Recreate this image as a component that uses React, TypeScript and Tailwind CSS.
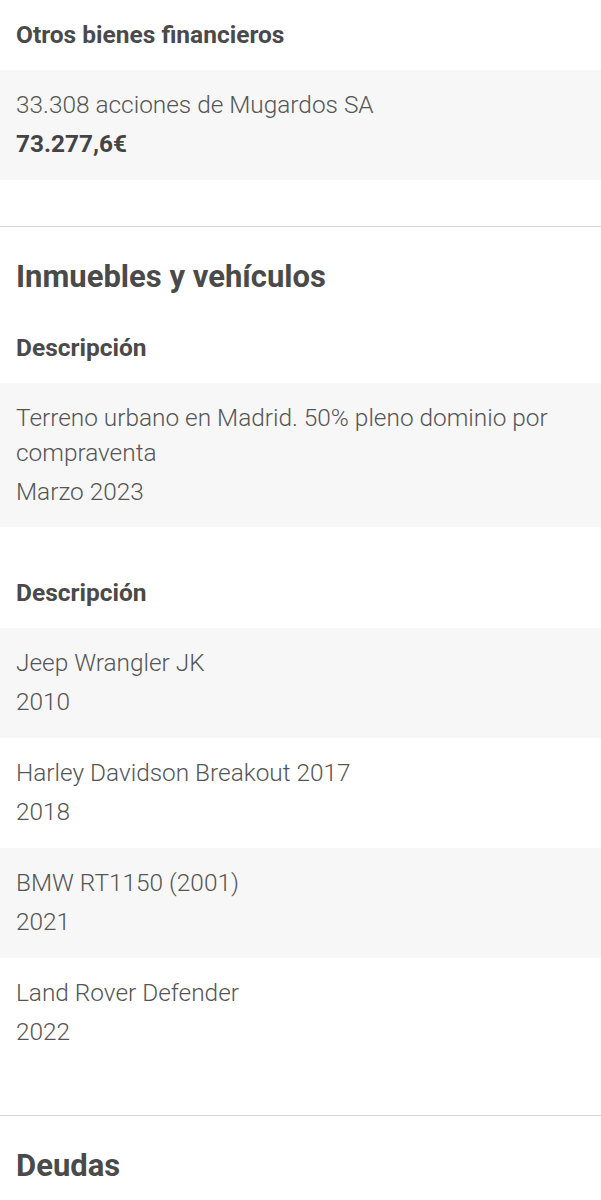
import React from "react";

type Item = { lines: string; sub: string; bold?: boolean };

function Label({ children }: { children: React.ReactNode }) {
  return (
    <div className="h-[70px] flex items-center px-4">
      <span className="text-[24.5px] font-bold text-[#4a4a4a] leading-none">{children}</span>
    </div>
  );
}

function Row({ item, gray, tight }: { item: Item; gray: boolean; tight?: boolean }) {
  return (
    <div
      className={
        (gray ? "bg-[#f7f7f7] " : "bg-white ") + (tight ? "px-4 pt-[17px] pb-[18px]" : "px-4 pt-[17px] pb-[19px]")
      }
    >
      <p className="text-[24.4px] font-light leading-[35px] text-[#555555]">{item.lines}</p>
      <p
        className={
          item.bold
            ? "mt-[4px] text-[24.4px] font-bold leading-[35px] text-[#444444]"
            : "mt-[4px] text-[24.4px] font-light leading-[35px] text-[#555555]"
        }
      >
        {item.sub}
      </p>
    </div>
  );
}

function Heading({ children }: { children: React.ReactNode }) {
  return (
    <h2 className="px-4 pt-[30px] pb-[16px] text-[31px] leading-[40px] font-bold text-[#4a4a4a]">
      {children}
    </h2>
  );
}

export default function App() {
  const vehicles: Item[] = [
    { lines: "Jeep Wrangler JK", sub: "2010" },
    { lines: "Harley Davidson Breakout 2017", sub: "2018" },
    { lines: "BMW RT1150 (2001)", sub: "2021" },
    { lines: "Land Rover Defender", sub: "2022" },
  ];
  return (
    <div
      className="w-[601px] min-h-[1200px] bg-white overflow-hidden"
      style={{ fontFamily: "Roboto, 'Noto Sans', sans-serif" }}
    >
      <Label>Otros bienes financieros</Label>
      <Row item={{ lines: "33.308 acciones de Mugardos SA", sub: "73.277,6€", bold: true }} gray />
      <div className="h-[46px]" />
      <div className="border-t border-[#d6d6d6]" />
      <Heading>Inmuebles y vehículos</Heading>
      <Label>Descripción</Label>
      <Row
        item={{ lines: "Terreno urbano en Madrid. 50% pleno dominio por compraventa", sub: "Marzo 2023" }}
        gray
        tight
      />
      <div className="h-[31px]" />
      <Label>Descripción</Label>
      {vehicles.map((v, i) => (
        <Row key={i} item={v} gray={i % 2 === 0} />
      ))}
      <div className="h-[47px]" />
      <div className="border-t border-[#d6d6d6]" />
      <Heading>Deudas</Heading>
    </div>
  );
}
